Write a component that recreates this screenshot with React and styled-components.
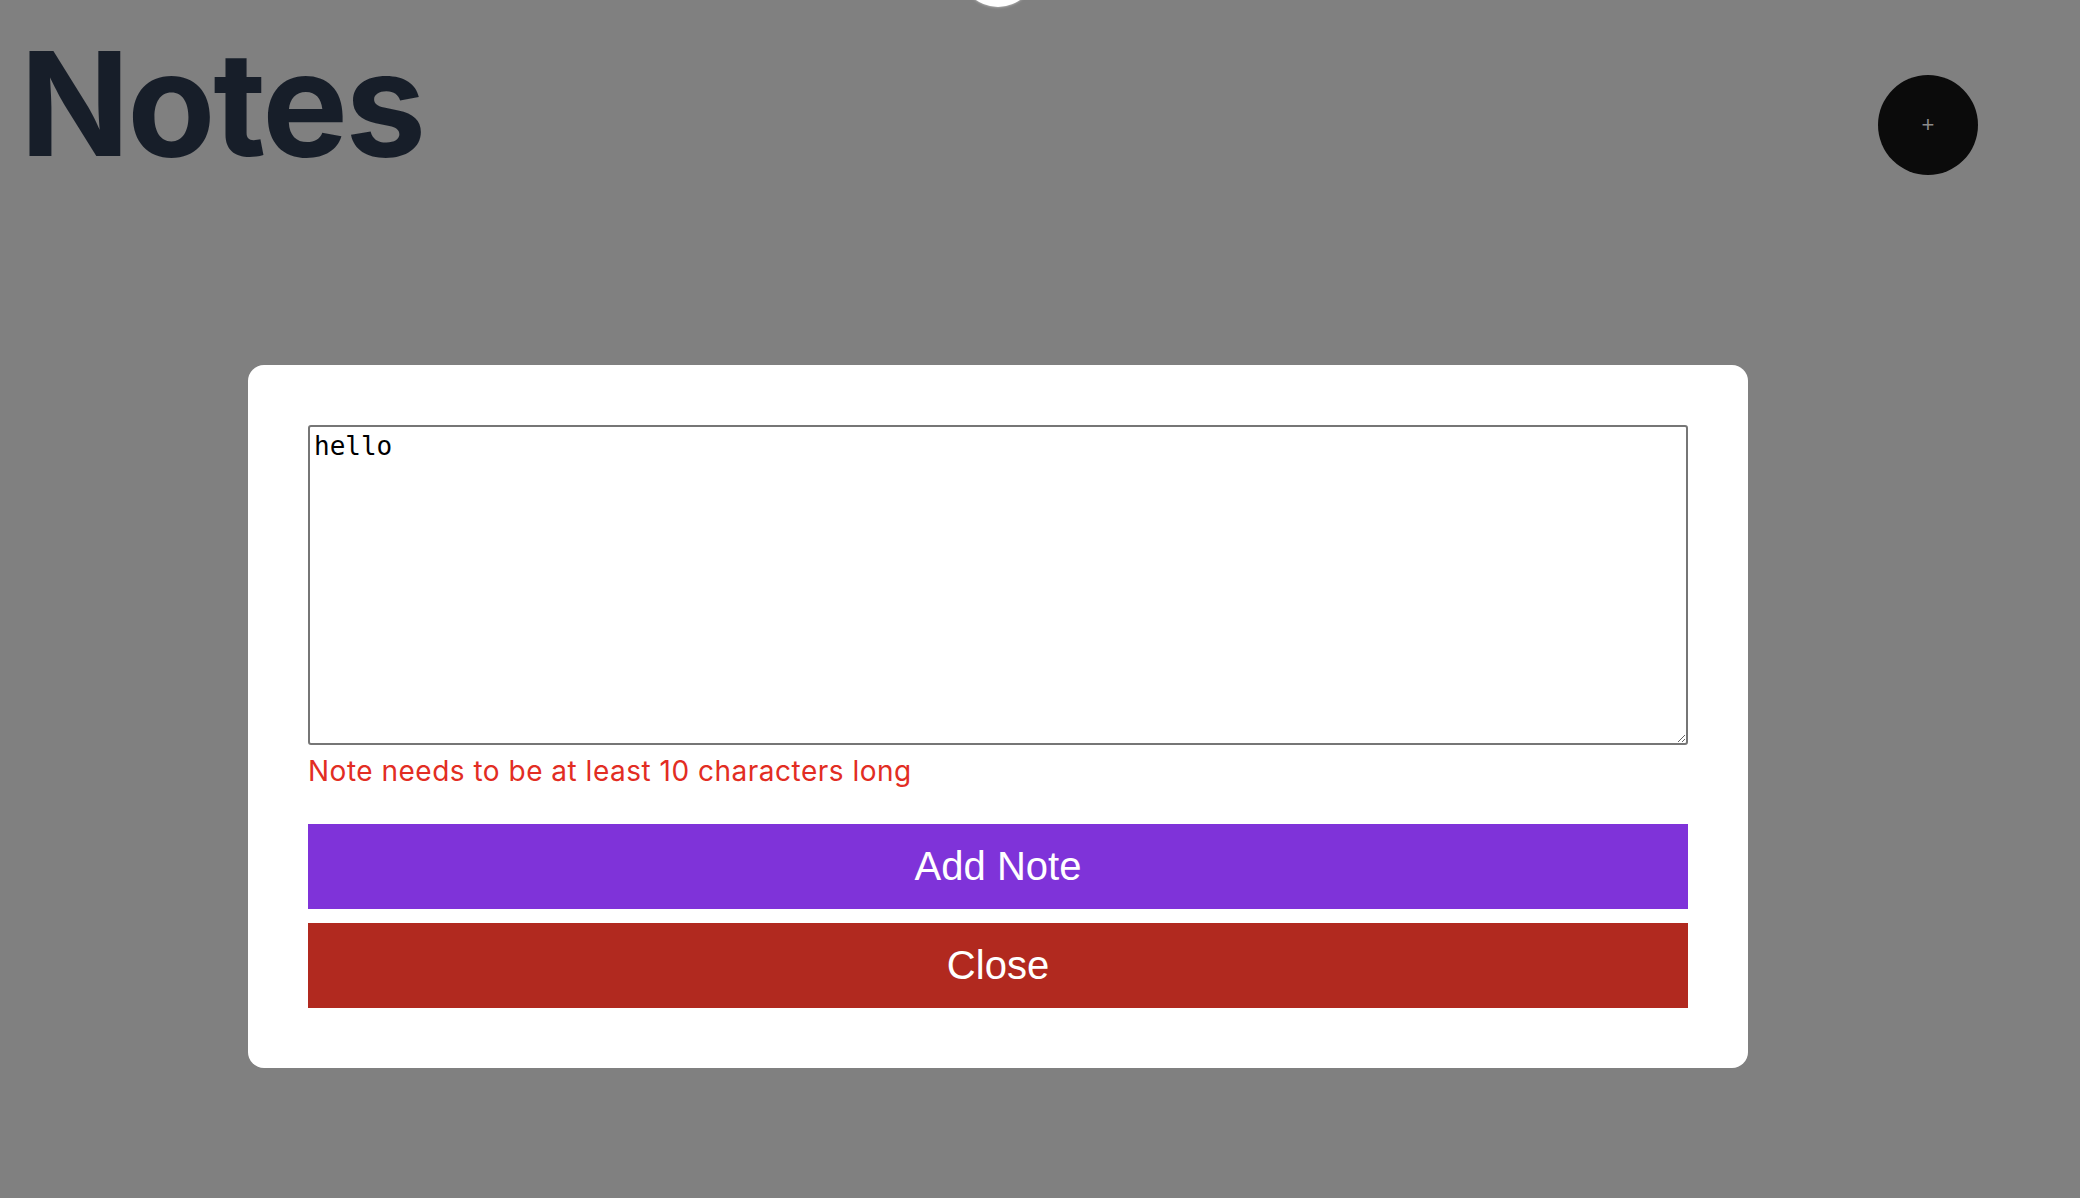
import React from 'react';
import styled, { createGlobalStyle } from 'styled-components';

const GlobalStyle = createGlobalStyle`
  html, body {
    margin: 0;
    padding: 0;
    background: #808080;
    font-family: "Liberation Sans", Arial, sans-serif;
  }
  * {
    box-sizing: border-box;
  }
`;

const Page = styled.div`
  min-height: 1198px;
  position: relative;
`;

const Header = styled.header`
  display: flex;
  justify-content: space-between;
  align-items: flex-start;
  padding: 0 102px 0 20px;
`;

const Title = styled.h1`
  margin: 32px 0 0;
  font: bold 144px/144px Inter, "Liberation Sans", sans-serif;
  letter-spacing: -2.4px;
  color: #171e29;
`;

const Fab = styled.button`
  margin-top: 75px;
  width: 100px;
  height: 100px;
  border-radius: 50%;
  border: none;
  background: #0b0b0b;
  color: #8a8a8a;
  font: 22px "Liberation Sans", Arial, sans-serif;
  display: flex;
  align-items: center;
  justify-content: center;
  padding: 0;
`;

/* little white blob peeking in at the top edge */
const Spinner = styled.div`
  position: absolute;
  top: -69px;
  left: 960px;
  width: 76px;
  height: 76px;
  border-radius: 50%;
  background: #fff;
  box-shadow: 0 0 3px rgba(255, 255, 255, 0.6);
`;

const Overlay = styled.div`
  position: fixed;
  inset: 0;
  display: flex;
  justify-content: center;
  align-items: flex-start;
  padding: 365px 84px 0 0;
`;

const Modal = styled.div`
  width: 1500px;
  background: #fff;
  border-radius: 16px;
  padding: 60px;
  display: flex;
  flex-direction: column;
`;

const NoteInput = styled.textarea`
  display: block;
  width: 100%;
  height: 320px;
  border: 2px solid #767676;
  border-radius: 3px;
  padding: 4px;
  margin: 0;
  font: 26px "DejaVu Sans Mono", monospace;
  color: #000;
  resize: both;
  outline: none;
`;

const Error = styled.p`
  margin: 9px 0 0;
  font: 28px Inter, "Liberation Sans", sans-serif;
  letter-spacing: 0.5px;
  color: #e22d23;
`;

const Button = styled.button`
  width: 100%;
  height: 85px;
  border: none;
  margin-top: ${(p) => p.$gap}px;
  background: ${(p) => p.$bg};
  color: #fff;
  font: 40px "Liberation Sans", Arial, sans-serif;
`;

const App = () => (
  <Page>
    <GlobalStyle />
    <Spinner />
    <Header>
      <Title>Notes</Title>
      <Fab>+</Fab>
    </Header>
    <Overlay>
      <Modal>
        <NoteInput defaultValue="hello" />
        <Error>Note needs to be at least 10 characters long</Error>
        <Button $bg="#7f33d9" $gap={36}>Add Note</Button>
        <Button $bg="#b1291f" $gap={14}>Close</Button>
      </Modal>
    </Overlay>
  </Page>
);

export default App;
